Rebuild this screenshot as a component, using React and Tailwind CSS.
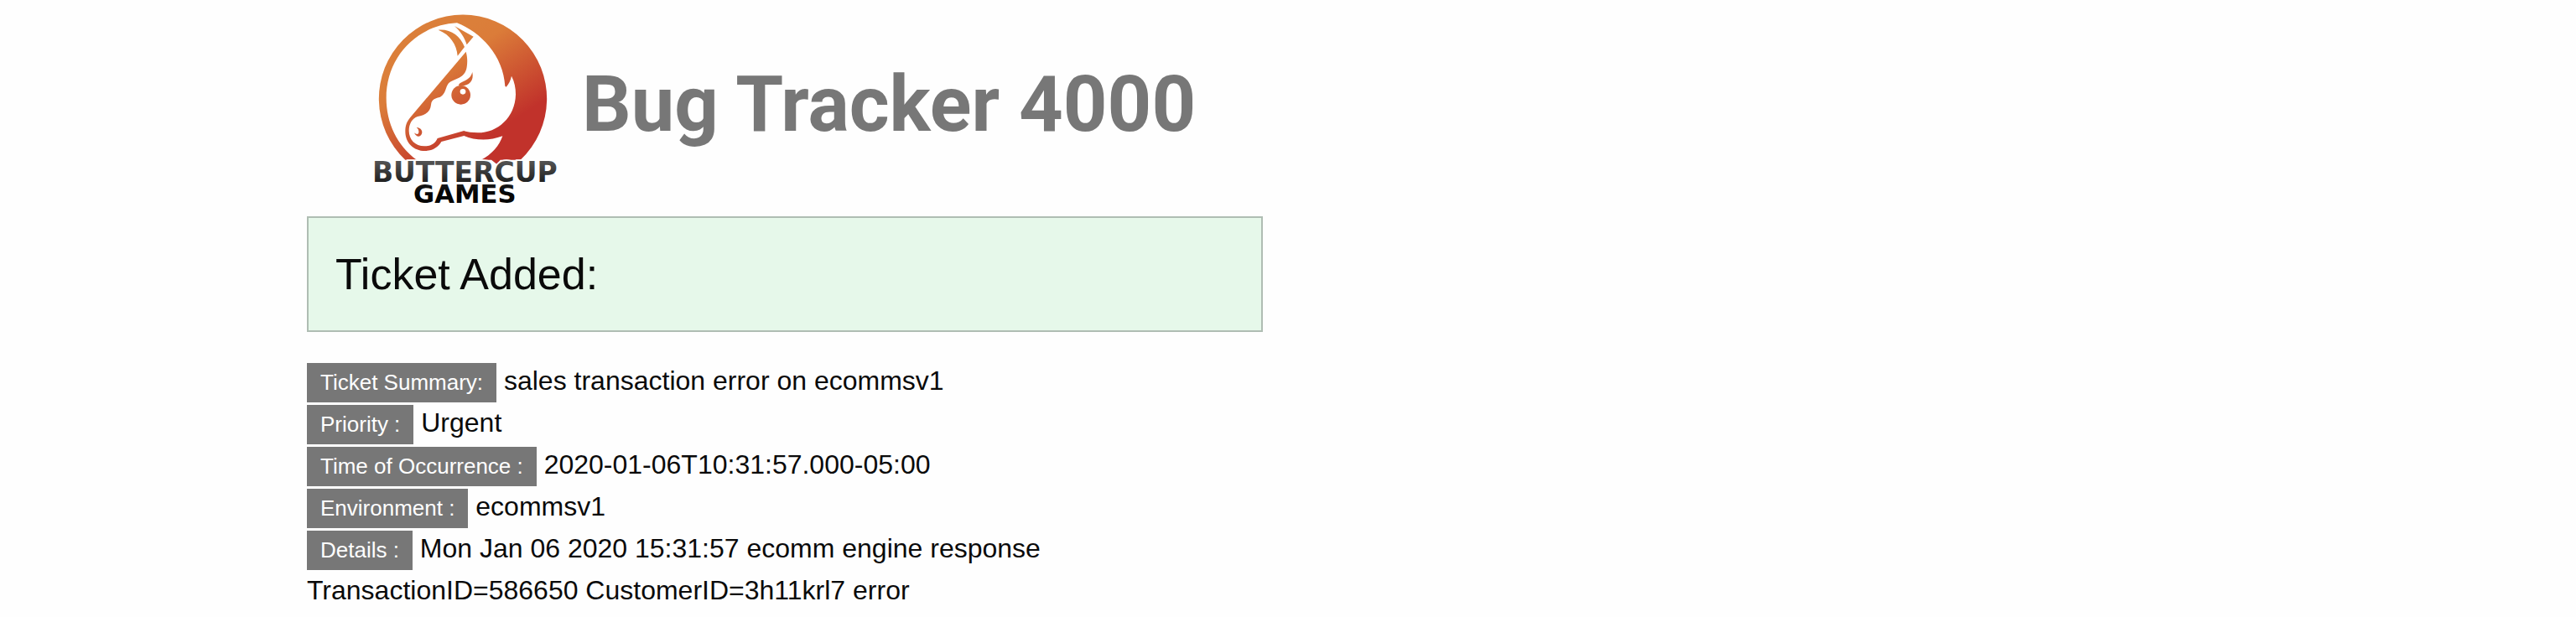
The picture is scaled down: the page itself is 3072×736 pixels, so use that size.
import React from "react";

const ticket = [
  { label: "Ticket Summary:", value: "sales transaction error on ecommsv1" },
  { label: "Priority :", value: "Urgent" },
  { label: "Time of Occurrence :", value: "2020-01-06T10:31:57.000-05:00" },
  { label: "Environment :", value: "ecommsv1" },
  {
    label: "Details :",
    value:
      "Mon Jan 06 2020 15:31:57 ecomm engine response TransactionID=586650 CustomerID=3h11krl7 error",
  },
];

function Logo() {
  return (
    <svg
      className="h-[258px] w-[270px] shrink-0"
      viewBox="0 0 810 774"
      role="img"
      aria-label="Buttercup Games"
    >
      <defs>
        <linearGradient id="coat" gradientUnits="userSpaceOnUse" x1="300" y1="170" x2="500" y2="480">
          <stop offset="0" stopColor="#db7f3a" />
          <stop offset="0.2" stopColor="#db7c39" />
          <stop offset="1" stopColor="#c1322b" />
        </linearGradient>
        <linearGradient id="ink" gradientUnits="userSpaceOnUse" x1="0" y1="582" x2="0" y2="690">
          <stop offset="0" stopColor="#505050" />
          <stop offset="1" stopColor="#050505" />
        </linearGradient>
      </defs>

      <g fill="url(#coat)">
        {/* ring and mane */}
        <path d="M190 572 A300.500 300.500 0 1 1 602 572 L530 572 L518 588 L498 572 Z" />
        <path
          fill="#ffffff"
          d="M232 573 C160 520 122 440 122 350 C122 210 225 90 375 82 C460 115 541 200 547 308 L551 311 C560 300 567 288 570 272 C581 292 585 315 585 338 C583 420 520 475 450 475 C430 475 412 473 400 469 L400 486 C440 503 490 505 538 487 C527 520 500 553 460 573 Z"
        />
        {/* face and muzzle */}
        <path d="M407 185 L208 420 C195 436 190 450 190 470 C190 511 220 540 260 540 C288 540 308 526 319 507 L400 486 L410 478 L400 468 L305 495 C297 513 283 523 258 523 C226 523 203 500 203 468 C203 444 214 424 234 417 C258 413 280 402 282 375 C284 352 300 352 315 347 C336 335 333 312 345 298 C365 280 404 282 410 240 C413 220 412 202 407 185 Z" />
        {/* ears */}
        <path d="M308 107 C352 103 386 128 402 168 L377 200 C374 160 351 124 308 107 Z" />
        <path d="M366 93 L434 131 L410 160 C402 135 388 112 366 93 Z" />
        {/* eye and brow */}
        <ellipse cx="389" cy="340" rx="34" ry="34" />
        <path d="M430 258 C423 285 401 289 387 297 C380 301 378 308 388 308 C420 306 436 290 430 258 Z" />
        <circle cx="396" cy="328" r="10" fill="#ffffff" />
        {/* nostril */}
        <path d="M230 456 C247 457 254 470 248 481 C242 493 228 490 222 475 C230 482 237 481 238 474 C239 466 236 461 230 456 Z" />
      </g>

      <g
        fill="url(#ink)"
        fontFamily="'DejaVu Sans', sans-serif"
        fontWeight="700"
        textAnchor="middle"
      >
        <text x="403" y="650" fontSize="99" stroke="#ffffff" strokeWidth="10" paintOrder="stroke">
          BUTTERCUP
        </text>
        <text x="403" y="726" fontSize="92">GAMES</text>
      </g>
    </svg>
  );
}

export default function App() {
  return (
    <div className="min-h-screen bg-[#fefefe] font-['Liberation_Sans',Arial,sans-serif] text-[#0a0a0a]">
      <div className="mx-auto max-w-[2400px]">
        <main className="w-1/2 px-[30px]">
          <header className="flex items-center pl-[54px]">
            <Logo />
            <h1 className="pb-2 pl-1 font-['Roboto',sans-serif] text-[92px] leading-[92px] font-bold whitespace-nowrap text-[#777777]">
              Bug Tracker 4000
            </h1>
          </header>

          <section className="mb-[34px] border-2 border-[#afbdb3] bg-[#e6f8ea] p-8">
            <h2 className="text-[52px] leading-[70px]">Ticket Added:</h2>
          </section>

          <div className="text-[32px] leading-[48px]">
            {ticket.map((row) => (
              <p key={row.label}>
                <span className="inline-block bg-[#777777] px-4 py-[10px] text-[26px] leading-[27px] text-[#fefefe]">
                  {row.label}
                </span>{" "}
                {row.value}
              </p>
            ))}
          </div>
        </main>
      </div>
    </div>
  );
}
